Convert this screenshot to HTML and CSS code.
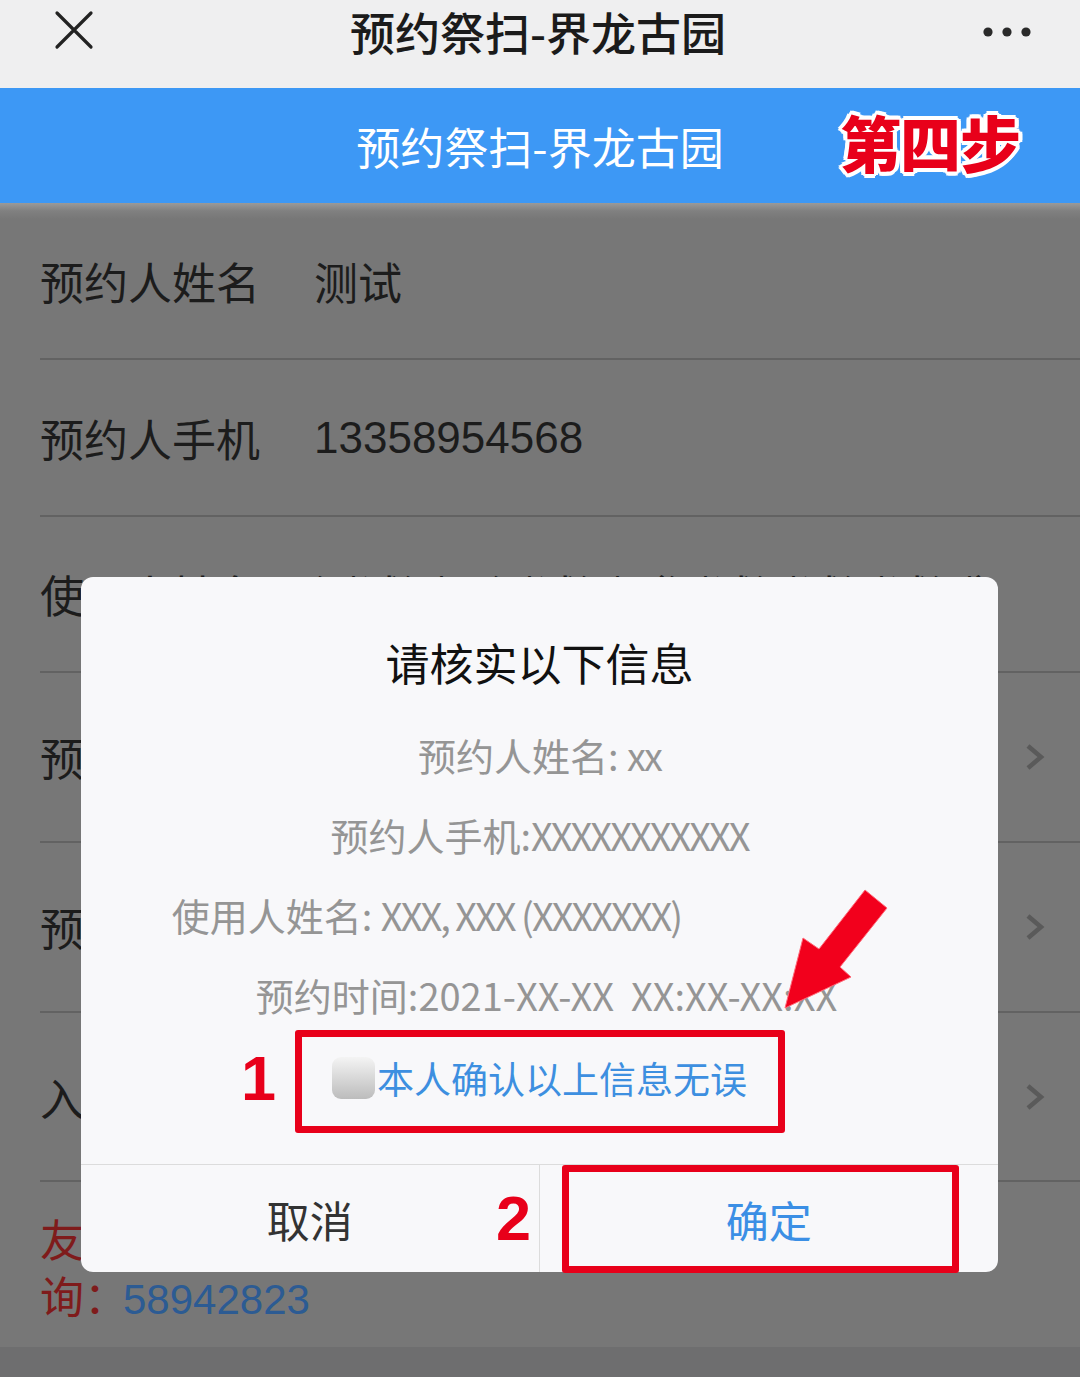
FILE: index.html
```html
<!DOCTYPE html>
<html lang="zh-CN">
<head>
<meta charset="utf-8">
<title>预约祭扫-界龙古园</title>
<link rel="stylesheet" href="styles.css">
</head>
<body>
<div class="page">
  <div class="topbar">
    <div class="topbar-left">
      <svg class="close-icon" width="40" height="40" viewBox="0 0 40 40"><path d="M3 3 L37 37 M37 3 L3 37" stroke="#222" stroke-width="3.2" fill="none" stroke-linecap="round"/></svg>
    </div>
    <div class="topbar-title">预约祭扫-界龙古园</div>
    <div class="topbar-right">
      <svg class="more-icon" width="50" height="12" viewBox="0 0 50 12"><circle cx="6" cy="6" r="4.6" fill="#2a2a2a"/><circle cx="25" cy="6" r="4.6" fill="#2a2a2a"/><circle cx="44" cy="6" r="4.6" fill="#2a2a2a"/></svg>
    </div>
  </div>

  <header class="banner">
    <h1 class="banner-title">预约祭扫-界龙古园</h1>
    <span class="step-badge">第四步</span>
  </header>

  <main class="form">
    <div class="row row-short"><span class="label">预约人姓名</span><span class="value">测试</span></div>
    <div class="row row-short"><span class="label">预约人手机</span><span class="value num">13358954568</span></div>
    <div class="row row-short"><span class="label">使用人姓名</span><span class="value">测试测，测试测（测试测试测试测）</span></div>
    <div class="row row-tall"><span class="label">预约日期</span><span class="value"></span>
      <svg class="chevron" width="20" height="28" viewBox="0 0 20 28"><path d="M3 3 L16 14 L3 25" stroke="#5a5a5a" stroke-width="4.5" fill="none"/></svg></div>
    <div class="row row-tall"><span class="label">预约时段</span><span class="value"></span>
      <svg class="chevron" width="20" height="28" viewBox="0 0 20 28"><path d="M3 3 L16 14 L3 25" stroke="#5a5a5a" stroke-width="4.5" fill="none"/></svg></div>
    <div class="row row-tall"><span class="label">入园人数</span><span class="value"></span>
      <svg class="chevron" width="20" height="28" viewBox="0 0 20 28"><path d="M3 3 L16 14 L3 25" stroke="#5a5a5a" stroke-width="4.5" fill="none"/></svg></div>
    <p class="notice">友情提示：请致电咨<br>询：<span class="phone">58942823</span></p>
  </main>
  <footer class="bottom-band"></footer>

  <div class="modal">
    <div class="modal-body">
      <div class="modal-title">请核实以下信息</div>
      <div class="info">预约人姓名: <span class="tight">xx</span></div>
      <div class="info">预约人手机:<span class="tight">XXXXXXXXXXX</span></div>
      <div class="info info-user">使用人姓名: <span class="tight">XXX, XXX (XXXXXXX)</span></div>
      <div class="info info-time">预约时间:2021-XX-XX&nbsp;&nbsp;XX:XX-XX:XX</div>
      <label class="confirm"><span class="checkbox"></span><span class="confirm-text">本人确认以上信息无误</span></label>
    </div>
    <div class="actions">
      <div class="btn btn-cancel"><span>取消</span></div>
      <div class="btn btn-ok"><span>确定</span></div>
    </div>

    <div class="mark-box mark-box-1"></div>
    <div class="mark-num mark-num-1">1</div>
    <div class="mark-box mark-box-2"></div>
    <div class="mark-num mark-num-2">2</div>
    <svg class="mark-arrow" width="917" height="695" viewBox="0 0 917 695">
      <polygon points="704,431 722,361 738,372 784,313 806,331 759,390 770,400" fill="#f2001c" stroke="#ff6b7a" stroke-width="1"/>
    </svg>
  </div>
</div>
</body>
</html>
```
FILE: styles.css
```css
* { box-sizing: border-box; }
html, body { margin: 0; padding: 0; }
body {
  width: 1080px;
  height: 1377px;
  overflow: hidden;
  font-family: "Noto Sans CJK SC", "Liberation Sans", sans-serif;
  background: #6e6e6e;
}
.page { position: relative; width: 1080px; height: 1377px; }

.topbar {
  height: 88px;
  background: #efeff0;
  display: grid;
  grid-template-columns: 1fr auto 1fr;
  align-items: start;
}
.topbar-left { padding: 10px 0 0 54px; }
.close-icon { display: block; }
.topbar-title {
  font-size: 45px;
  line-height: 64px;
  color: #1b1b1b;
  font-weight: 500;
  padding-right: 4px;
}
.topbar-right { display: flex; justify-content: flex-end; padding: 26px 48px 0 0; }
.more-icon { display: block; }

.banner {
  position: relative;
  height: 115px;
  background: #3d98f5;
  display: flex;
  align-items: center;
  justify-content: center;
  z-index: 2;
}
.banner-title {
  margin: 0;
  font-size: 44px;
  font-weight: 400;
  color: #ffffff;
  line-height: 60px;
}
.step-badge {
  position: absolute;
  right: 60px;
  top: 23px;
  font-size: 61px;
  line-height: 61px;
  font-weight: 900;
  color: #e8001a;
  letter-spacing: -1px;
  text-shadow:
    3px 0 0 #fff, -3px 0 0 #fff, 0 3px 0 #fff, 0 -3px 0 #fff,
    2px 2px 0 #fff, -2px 2px 0 #fff, 2px -2px 0 #fff, -2px -2px 0 #fff,
    4px 1px 0 #fff, -4px 1px 0 #fff, 1px 4px 0 #fff, 1px -4px 0 #fff,
    4px -1px 0 #fff, -4px -1px 0 #fff, -1px 4px 0 #fff, -1px -4px 0 #fff;
}

.form {
  height: 1144px;
  background: linear-gradient(#9a9a9a 0, #808080 8px, #777777 16px, #777777 100%);
  font-family: "Liberation Sans", "Noto Sans CJK SC", sans-serif;
}
.row {
  margin-left: 40px;
  display: flex;
  align-items: center;
  border-bottom: 2px solid #626262;
  color: #1c1c1c;
  font-size: 44px;
}
.row-short { height: 157px; }
.row:nth-child(3) { height: 156px; }
.row-tall { height: 170px; }
.row:last-of-type { height: 169px; }
.label {
  width: 274px;
  flex: none;
  font-family: "Noto Sans CJK SC", sans-serif;
}
.value { flex: 1; font-family: "Noto Sans CJK SC", sans-serif; }
.value.num { font-family: "Liberation Sans", sans-serif; }
.chevron { margin-right: 35px; flex: none; }

.notice {
  margin: 0;
  padding: 28px 40px 0 40px;
  font-size: 44px;
  line-height: 57px;
  color: #7f1b1b;
  font-family: "Noto Sans CJK SC", sans-serif;
}
.phone {
  font-family: "Liberation Sans", sans-serif;
  font-size: 42px;
  color: #2c5b93;
  margin-left: -5px;
}
.bottom-band { height: 30px; background: #6e6e6f; }

/* dialog over the page */
.modal {
  position: absolute;
  left: 81px;
  top: 577px;
  width: 917px;
  height: 695px;
  background: #f8f8fa;
  border-radius: 12px;
  display: flex;
  flex-direction: column;
  z-index: 5;
  font-family: "Noto Sans CJK SC", sans-serif;
}
.modal-body {
  flex: 1;
  padding-top: 55px;
  display: flex;
  flex-direction: column;
  align-items: stretch;
  text-align: center;
}
.modal-title {
  font-size: 44px;
  line-height: 60px;
  color: #111;
  margin-bottom: 23px;
  font-weight: 400;
}
.info {
  font-size: 38px;
  line-height: 80px;
  color: #959595;
}
.tight { letter-spacing: -2px; }
.info-user { padding-right: 226px; }
.info-time { padding-left: 14px; }
.confirm {
  height: 86px;
  display: flex;
  align-items: center;
  justify-content: center;
  gap: 2px;
}
.checkbox {
  width: 43px;
  height: 42px;
  border-radius: 9px;
  background: linear-gradient(#f4f4f4, #bcbcbc);
}
.confirm-text {
  font-size: 37px;
  color: #3d8fe0;
  line-height: 50px;
}
.actions {
  height: 108px;
  border-top: 1px solid #dcdcdc;
  display: grid;
  grid-template-columns: 1fr 1fr;
}
.btn {
  display: flex;
  align-items: center;
  justify-content: center;
  font-size: 43px;
}
.btn-cancel { color: #333; border-right: 1px solid #dcdcdc; }
.btn-ok { color: #3b8fe5; }

/* red annotation marks */
.mark-box {
  position: absolute;
  border: 7px solid #e8001a;
  border-radius: 3px;
}
.mark-box-1 { left: 214px; top: 453px; width: 490px; height: 103px; }
.mark-box-2 { left: 481px; top: 588px; width: 397px; height: 108px; }
.mark-num {
  position: absolute;
  font-family: "Liberation Sans", sans-serif;
  font-weight: 700;
  font-size: 63px;
  line-height: 63px;
  color: #e8001a;
}
.mark-num-1 { left: 160px; top: 470px; }
.mark-num-2 { left: 415px; top: 610px; }
.mark-arrow { position: absolute; left: 0; top: 0; pointer-events: none; }
```
